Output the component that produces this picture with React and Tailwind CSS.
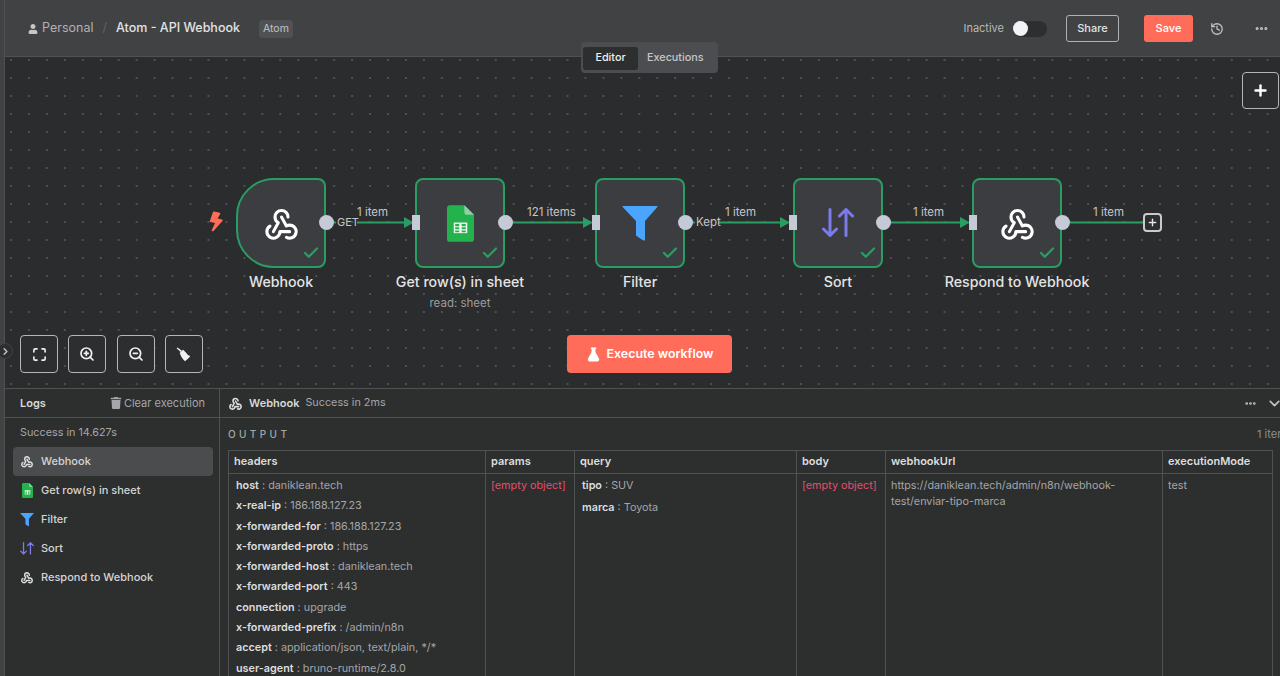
import React from 'react';
import { Check, ChevronDown, ChevronRight, Ellipsis, FlaskConical, History, Maximize, Plus, ZoomIn, ZoomOut } from 'lucide-react';
import { FaBolt, FaTrash, FaUser } from 'react-icons/fa';

const WebhookIcon = ({ className }) => (
  <svg viewBox="0 0 24 24" fill="none" stroke="currentColor" strokeLinecap="round" strokeLinejoin="round" className={className}>
    <path d="M4.9 13.6a4 4 0 1 0 6.1 3.4h6" />
    <path d="M15.07 20.5a4 4 0 1 0 1.93-7.5c-.7 0-1.42.18-2 .5l-3-5.5" />
    <path d="M16 8a4 4 0 1 0-8 0c0 1.5.77 2.82 2 3.5l-3 5.5" />
  </svg>
);

const SheetIcon = ({ className }) => (
  <svg viewBox="0 0 28 38" className={className}>
    <path d="M3 0h15l10 10v25a3 3 0 0 1-3 3H3a3 3 0 0 1-3-3V3a3 3 0 0 1 3-3z" fill="#23b24c" />
    <path d="M18 0l10 10h-7a3 3 0 0 1-3-3z" fill="#8ed1a4" />
    <path d="M7 18h14v11H7z" fill="#f1f8f3" />
    <path d="M8.5 21.8h4.2v-2.4H8.5zM15.2 21.8h4.3v-2.4h-4.3zM8.5 25h4.2v-2h-4.2zM15.2 25h4.3v-2h-4.3zM8.5 28h4.2v-1.8H8.5zM15.2 28h4.3v-1.8h-4.3z" fill="#23b24c" />
  </svg>
);

const FunnelIcon = ({ className }) => (
  <svg viewBox="0 0 36 36" className={className}>
    <path d="M1 1h34a.6.6 0 0 1 .4 1L23 16v18.4c0 .9-.9 1.4-1.7 1L14.6 31a1.5 1.5 0 0 1-.6-1.2V16L.6 2A.6.6 0 0 1 1 1z" fill="#4ba5ff" />
  </svg>
);

const SortIcon = ({ className }) => (
  <svg viewBox="0 0 32 30" fill="none" stroke="#7b7bea" strokeWidth="3" strokeLinecap="round" strokeLinejoin="round" className={className}>
    <path d="M8 1.5v26M1.5 21l6.5 6.5 6.5-6.5" />
    <path d="M24 27.5v-26M17.5 8L24 1.5 30.5 8" />
  </svg>
);

const BroomIcon = ({ className }) => (
  <svg viewBox="0 0 16 16" fill="currentColor" className={className}>
    <path d="M.6 1.4l1-1 4.7 3.7-1.3 1.3z" />
    <path d="M4 6l3.6-3.1 3.2 3.2c.9 1.6 2.2 2.9 4.4 3.6-1.4 2.2-3.3 4.1-5.6 5.5C7 13 5 9.5 4 6z" />
  </svg>
);

const Node = ({ name, sub, pos, shape = 'rounded-lg', children }) => (
  <div className={`absolute top-[121px] w-[90px] ${pos}`}>
    <div className={`relative flex h-[90px] w-[90px] items-center justify-center border-2 border-[#2a9d62] bg-[#3c3d40] ${shape}`}>
      {children}
      <Check className="absolute bottom-[4px] right-[4px] h-[18px] w-[18px] text-[#2a9d62]" strokeWidth={3} />
    </div>
    <div className="absolute left-1/2 top-[94px] -translate-x-1/2 whitespace-nowrap text-center text-[14.2px] font-medium leading-[20px] text-[#e4e4e5]">
      {name}
      {sub && <div className="mt-[2px] text-[11.5px] font-normal leading-[18px] text-[#9b9c9e]">{sub}</div>}
    </div>
  </div>
);

const EdgeLabel = ({ pos, children }) => (
  <span className={`absolute whitespace-nowrap text-[11.5px] leading-[14px] text-[#c4c5c7] ${pos}`}>{children}</span>
);

const CanvasButton = ({ children }) => (
  <button className="flex h-[38px] w-[38px] items-center justify-center rounded-[4px] border border-[#b5b6b8] bg-[#2d2e2f] text-[#f0f0f0]">
    {children}
  </button>
);

const LogRow = ({ active, icon, children }) => (
  <div className={`flex h-[29px] items-center gap-[7px] rounded-[4px] pl-[7px] text-[11px] font-medium text-[#d4d5d6] ${active ? 'bg-[#4b4c4e]' : ''}`}>
    <span className="flex w-[14px] shrink-0 justify-center">{icon}</span>
    {children}
  </div>
);

const headers = [
  ['host', 'daniklean.tech'],
  ['x-real-ip', '186.188.127.23'],
  ['x-forwarded-for', '186.188.127.23'],
  ['x-forwarded-proto', 'https'],
  ['x-forwarded-host', 'daniklean.tech'],
  ['x-forwarded-port', '443'],
  ['connection', 'upgrade'],
  ['x-forwarded-prefix', '/admin/n8n'],
  ['accept', 'application/json, text/plain, */*'],
  ['user-agent', 'bruno-runtime/2.8.0'],
];

const Pair = ({ k, v }) => (
  <div className="h-[20.3px] whitespace-nowrap leading-[20px]">
    <span className="font-semibold text-[#dcdddf]">{k}</span>
    <span className="text-[#a5a6a8]"> : {v}</span>
  </div>
);

const Column = ({ title, width, last, children }) => (
  <div className={`flex shrink-0 flex-col ${width} ${last ? '' : 'border-r border-[#505153]'}`}>
    <div className="flex h-[23px] shrink-0 items-center border-b border-[#505153] px-[5px] pb-[1px] text-[11px] font-semibold text-[#dcdddf]">{title}</div>
    <div className="flex-1 text-[10.8px] text-[#a5a6a8]">{children}</div>
  </div>
);

export default function App() {
  return (
    <div className="flex h-[676px] w-[1280px] overflow-hidden bg-[#2d2e2e] font-['Inter',sans-serif]">
      <div className="w-[5px] shrink-0 border-r border-[#4f5052] bg-[#414244]" />

      <div className="relative flex min-w-0 flex-1 flex-col">
        {/* top bar */}
        <header className="flex h-[57px] shrink-0 items-center border-b border-[#505153] bg-[#414244] pl-[23px] pt-[1px] text-[12.5px]">
          <FaUser className="mr-[4px] h-[10px] w-[10px] text-[#c6c7c9]" />
          <span className="text-[#b0b1b3]">Personal</span>
          <span className="mx-[9px] text-[#626365]">/</span>
          <span className="font-medium text-[#e2e3e4]">Atom - API Webhook</span>
          <span className="ml-[19px] rounded-[4px] bg-[#505154] px-[4px] py-[2px] text-[10.5px] leading-[14px] text-[#c3c4c6]">Atom</span>
          <div className="ml-auto flex items-center pr-[11px]">
            <span className="text-[11px] text-[#b6b7b9]">Inactive</span>
            <div className="ml-[9px] flex h-[16px] w-[34px] items-center rounded-full bg-[#2d2e2e]">
              <div className="h-[15px] w-[15px] rounded-full bg-[#f2f3f8]" />
            </div>
            <button className="ml-[19px] h-[27px] w-[53px] rounded-[3px] border border-[#b0b1b3] text-[11px] font-medium text-[#e2e3e4]">Share</button>
            <button className="ml-[25px] h-[27px] w-[49px] rounded-[3px] bg-[#ff6d5a] text-[11px] font-medium text-white">Save</button>
            <History className="ml-[17px] h-[14px] w-[14px] text-[#c0c1c3]" strokeWidth={2.2} />
            <Ellipsis className="ml-[30px] h-[15px] w-[15px] text-[#c0c1c3]" strokeWidth={3} />
          </div>
        </header>

        {/* workflow canvas */}
        <main className="relative h-[331px] shrink-0 bg-[#2b2c2d] bg-[radial-gradient(circle,#77787a_0.6px,transparent_0.8px)] bg-[size:17.96px_18px] bg-[position:-3px_-6px]">
          <svg className="absolute inset-0 h-full w-full" viewBox="0 0 1275 331">
            <g stroke="#2a9d62" strokeWidth="2" fill="none">
              <path d="M321 165.5h10M352 165.5h50" />
              <path d="M500 165.5h80" />
              <path d="M680 165.5h10M713 165.5h67" />
              <path d="M878 165.5h82" />
              <path d="M1057 165.5h81" />
            </g>
            <g fill="#2a9d62">
              <path d="M399 160l10 5.5-10 5.5z" />
              <path d="M578 160l10 5.5-10 5.5z" />
              <path d="M775 160l10 5.5-10 5.5z" />
              <path d="M955 160l10 5.5-10 5.5z" />
            </g>
          </svg>

          <Node name="Webhook" pos="left-[231px]" shape="rounded-l-[38px] rounded-r-lg">
            <WebhookIcon className="h-[39px] w-[39px] stroke-[1.9] text-white" />
          </Node>
          <Node name="Get row(s) in sheet" sub="read: sheet" pos="left-[410px]">
            <SheetIcon className="h-[37px] w-[27px]" />
          </Node>
          <Node name="Filter" pos="left-[590px]">
            <FunnelIcon className="h-[36px] w-[36px]" />
          </Node>
          <Node name="Sort" pos="left-[788px]">
            <SortIcon className="h-[30px] w-[32px]" />
          </Node>
          <Node name="Respond to Webhook" pos="left-[967px]">
            <WebhookIcon className="h-[39px] w-[39px] stroke-[1.9] text-white" />
          </Node>

          {/* ports */}
          <div className="absolute left-[314px] top-[158px] h-[15px] w-[15px] rounded-full bg-[#c5cad6]" />
          <div className="absolute left-[493px] top-[158px] h-[15px] w-[15px] rounded-full bg-[#c5cad6]" />
          <div className="absolute left-[673px] top-[158px] h-[15px] w-[15px] rounded-full bg-[#c5cad6]" />
          <div className="absolute left-[871px] top-[158px] h-[15px] w-[15px] rounded-full bg-[#c5cad6]" />
          <div className="absolute left-[1050px] top-[158px] h-[15px] w-[15px] rounded-full bg-[#c5cad6]" />
          <div className="absolute left-[407px] top-[158px] h-[15px] w-[8px] bg-[#c5cad6]" />
          <div className="absolute left-[587px] top-[158px] h-[15px] w-[8px] bg-[#c5cad6]" />
          <div className="absolute left-[784px] top-[158px] h-[15px] w-[8px] bg-[#c5cad6]" />
          <div className="absolute left-[964px] top-[158px] h-[15px] w-[8px] bg-[#c5cad6]" />

          <EdgeLabel pos="left-[332px] top-[158px] text-[11px]">GET</EdgeLabel>
          <EdgeLabel pos="left-[352px] top-[148px]">1 item</EdgeLabel>
          <EdgeLabel pos="left-[522px] top-[148px]">121 items</EdgeLabel>
          <EdgeLabel pos="left-[691px] top-[158px]">Kept</EdgeLabel>
          <EdgeLabel pos="left-[720px] top-[148px]">1 item</EdgeLabel>
          <EdgeLabel pos="left-[908px] top-[148px]">1 item</EdgeLabel>
          <EdgeLabel pos="left-[1088px] top-[148px]">1 item</EdgeLabel>

          <div className="absolute left-[1138px] top-[156px] flex h-[19px] w-[19px] items-center justify-center rounded-[4px] border-2 border-[#c9cacc] bg-[#2d2e2e]">
            <Plus className="h-[11px] w-[11px] text-[#e5e5e5]" strokeWidth={3} />
          </div>

          <button className="absolute left-[1237px] top-[15px] flex h-[37px] w-[37px] items-center justify-center rounded-[4px] border border-[#b5b6b8] bg-[#2d2e2f]">
            <Plus className="h-[17px] w-[17px] text-white" strokeWidth={3.4} />
          </button>

          <div className="absolute bottom-[15px] left-[15px] flex gap-[10.3px]">
            <CanvasButton><Maximize className="h-[15px] w-[15px]" strokeWidth={2.6} /></CanvasButton>
            <CanvasButton><ZoomIn className="h-[16px] w-[16px]" strokeWidth={2.6} /></CanvasButton>
            <CanvasButton><ZoomOut className="h-[16px] w-[16px]" strokeWidth={2.6} /></CanvasButton>
            <CanvasButton><BroomIcon className="h-[15px] w-[15px]" /></CanvasButton>
          </div>

          <button className="absolute left-[562px] top-[278px] flex h-[38px] w-[165px] items-center justify-center gap-[6px] rounded-[4px] bg-[#ff6d5a] pt-[1px] text-[12.4px] font-semibold text-white">
            <FlaskConical className="h-[15px] w-[15px] fill-white" strokeWidth={2.2} />
            Execute workflow
          </button>

          <FaBolt className="absolute left-[203px] top-[155px] h-[20px] w-[16px] rotate-[12deg] text-[#ff6d5a]" />
        </main>

        {/* editor / executions tabs sit across the bar and canvas */}
        <div className="absolute left-[576px] top-[42px] flex h-[31px] w-[137px] items-center rounded-[4px] bg-[#4c4d50] px-[2px] pt-[1px] text-[10.8px] font-medium">
          <span className="flex h-[23px] w-[55px] items-center justify-center rounded-[3px] bg-[#2d2e2e] text-[#f0f0f0]">Editor</span>
          <span className="ml-[9px] text-[#c5c6c8]">Executions</span>
        </div>

        <button className="absolute left-[-8px] top-[343px] flex h-[16px] w-[16px] items-center justify-center rounded-full border border-[#414244] bg-[#2d2e2e] text-[#c5c6c8]">
          <ChevronRight className="h-[11px] w-[11px]" strokeWidth={3} />
        </button>

        {/* logs */}
        <section className="flex min-h-0 flex-1 border-t border-[#505153] bg-[#2d2e2e]">
          <aside className="flex w-[215px] shrink-0 flex-col border-r border-[#505153]">
            <div className="flex h-[29px] shrink-0 items-center justify-between border-b border-[#505153] pl-[15px] pr-[14px]">
              <span className="text-[11px] font-semibold text-[#d8d9da]">Logs</span>
              <span className="flex items-center gap-[2px] text-[11px] text-[#a5a6a8]">
                <FaTrash className="h-[12px] w-[12px] text-[#a5a6a8]" />
                Clear execution
              </span>
            </div>
            <div className="px-[15px] pt-[8px] text-[10.8px] leading-[14px] text-[#a5a6a8]">Success in 14.627s</div>
            <div className="mt-[7px] flex flex-col pl-[8px] pr-[6px]">
              <LogRow active icon={<WebhookIcon className="h-[15px] w-[15px] stroke-[2.5] text-[#dcdddf]" />}>Webhook</LogRow>
              <LogRow icon={<SheetIcon className="h-[15px] w-[11px]" />}>Get row(s) in sheet</LogRow>
              <LogRow icon={<FunnelIcon className="h-[15px] w-[15px]" />}>Filter</LogRow>
              <LogRow icon={<SortIcon className="h-[13px] w-[14px]" />}>Sort</LogRow>
              <LogRow icon={<WebhookIcon className="h-[15px] w-[15px] stroke-[2.5] text-[#dcdddf]" />}>Respond to Webhook</LogRow>
            </div>
          </aside>

          <div className="flex min-w-0 flex-1 flex-col">
            <div className="flex h-[29px] shrink-0 items-center border-b border-[#505153] pl-[8px] text-[11px]">
              <WebhookIcon className="h-[15px] w-[15px] stroke-[2.5] text-[#dcdddf]" />
              <span className="ml-[6px] font-semibold text-[#d8d9da]">Webhook</span>
              <span className="ml-[6px] pt-[1px] text-[10.8px] text-[#a5a6a8]">Success in 2ms</span>
              <Ellipsis className="ml-auto h-[13px] w-[13px] text-[#c0c1c3]" strokeWidth={3} />
              <ChevronDown className="-mr-[3px] ml-[9px] h-[17px] w-[17px] shrink-0 text-[#c0c1c3]" strokeWidth={2.4} />
            </div>
            <div className="flex h-[32px] shrink-0 items-center justify-between pl-[8px]">
              <span className="text-[10px] font-medium tracking-[3.4px] text-[#a5a6a8]">OUTPUT</span>
              <span className="w-[23px] overflow-hidden whitespace-nowrap text-[11px] text-[#8e8f91]">1 item</span>
            </div>
            <div className="ml-[8px] flex min-h-0 w-[1045px] flex-1 border border-b-0 border-[#505153]">
              <Column title="headers" width="w-[257px]">
                <div className="px-[7px] pt-[2px]">
                  {headers.map(([k, v]) => <Pair key={k} k={k} v={v} />)}
                </div>
              </Column>
              <Column title="params" width="w-[89px]">
                <div className="px-[5px] pt-[4px] text-[#e0506e]">[empty object]</div>
              </Column>
              <Column title="query" width="w-[222px]">
                <div className="px-[7px] pt-[2px]">
                  <Pair k="tipo" v="SUV" />
                  <div className="h-[1.5px]" />
                  <Pair k="marca" v="Toyota" />
                </div>
              </Column>
              <Column title="body" width="w-[89px]">
                <div className="px-[5px] pt-[4px] text-[#e0506e]">[empty object]</div>
              </Column>
              <Column title="webhookUrl" width="w-[277px]">
                <div className="px-[5px] pt-[4px] leading-[16px]">https://daniklean.tech/admin/n8n/webhook-<br />test/enviar-tipo-marca</div>
              </Column>
              <Column title="executionMode" width="w-[110px]" last>
                <div className="px-[5px] pt-[4px] leading-[16px]">test</div>
              </Column>
            </div>
          </div>
        </section>
      </div>
    </div>
  );
}
